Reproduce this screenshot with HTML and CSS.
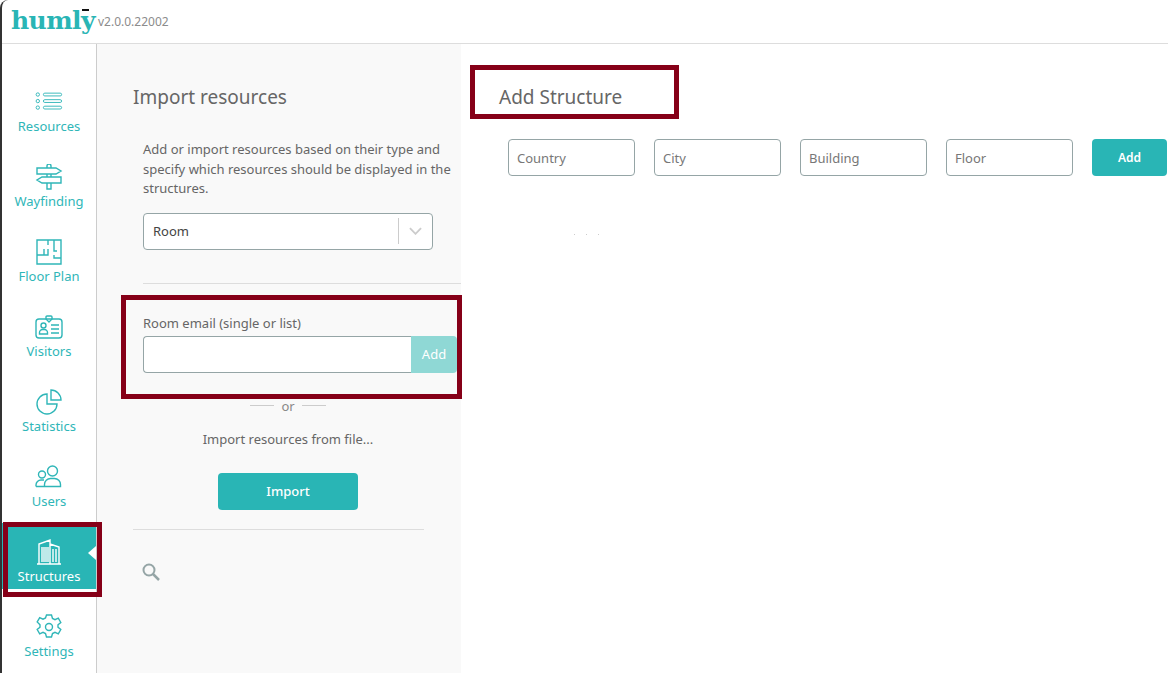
FILE: index.html
```html
<!DOCTYPE html>
<html lang="en">
<head>
<meta charset="utf-8">
<title>Humly</title>
<link rel="stylesheet" href="styles.css">
</head>
<body>
<div class="app">
  <header class="topbar">
    <span class="logo">humly<i class="logo-mark"></i></span>
    <span class="version">v2.0.0.22002</span>
  </header>
  <div class="workspace">
    <nav class="nav">
      <a class="nav-item">
        <svg class="nav-icon" viewBox="0 0 30 24"><circle cx="3" cy="4" r="1.8"/><circle cx="3" cy="11" r="1.8"/><circle cx="3" cy="18" r="1.8"/><rect x="9" y="2.5" width="19.5" height="3" rx="1.5"/><rect x="9" y="9.5" width="19.5" height="3" rx="1.5"/><rect x="9" y="16.5" width="19.5" height="3" rx="1.5"/></svg>
        <span>Resources</span>
      </a>
      <a class="nav-item">
        <svg class="nav-icon" viewBox="0 0 26 26"><path d="M11 4V2a2 2 0 0 1 4 0v2M1 4h19l5 3-5 3H1zM11 10v3M15 10v3M6 13h19v6H6l-5-3zM11 19v6h4v-6"/></svg>
        <span>Wayfinding</span>
      </a>
      <a class="nav-item">
        <svg class="nav-icon" viewBox="0 0 26 26"><path d="M1 1h24v24H1zM12 1v5M12 10v6H1M8 10v6M18 1v11h3M18 16v3h7M8 25h10"/></svg>
        <span>Floor Plan</span>
      </a>
      <a class="nav-item">
        <svg class="nav-icon" viewBox="0 0 28 24"><rect x="1" y="4" width="26" height="19" rx="3"/><path d="M11 4V2a1 1 0 0 1 1-1h4a1 1 0 0 1 1 1v2l-3 3zM4.500 19v-1.500a3 3 0 0 1 3-3h2a3 3 0 0 1 3 3V19zM16 10h8M16 14h8M16 18h8"/><circle cx="8.500" cy="10.500" r="2.500"/></svg>
        <span>Visitors</span>
      </a>
      <a class="nav-item">
        <svg class="nav-icon" viewBox="0 0 26 26"><path d="M11 5a10 10 0 1 0 10 10H11zM15 1a10 10 0 0 1 10 10H15z"/></svg>
        <span>Statistics</span>
      </a>
      <a class="nav-item">
        <svg class="nav-icon" viewBox="0 0 28 24"><circle cx="17.500" cy="6" r="5"/><circle cx="7" cy="9.500" r="3.500"/><path d="M9.500 21.500v-2a6 6 0 0 1 6-6h4a6 6 0 0 1 6 6v2zM1 21.500v-1.500a5 5 0 0 1 5-5h3M1 21.500h8"/></svg>
        <span>Users</span>
      </a>
      <a class="nav-item is-active">
        <svg class="nav-icon" viewBox="0 0 26 26"><path d="M1 25h24M3 25V5l11-4v24M14 5l9 3v17M6 8v15M8 8v15M10 8v15M12 8v15M17 10v13M20 10v13" /></svg>
        <span>Structures</span>
      </a>
      <a class="nav-item">
        <svg class="nav-icon" viewBox="0 0 26 26"><path d="M10.500 1h5l1 3.500 2.500 1.200 3.300-1.500 2.500 4.300-2.800 2.300v2.400l2.800 2.300-2.500 4.300-3.300-1.500-2.500 1.200-1 3.500h-5l-1-3.500-2.500-1.200-3.300 1.500-2.500-4.300 2.800-2.300v-2.400L1.200 8l2.500-4.300L7 5.200l2.500-1.200z"/><circle cx="13" cy="13" r="3.500"/></svg>
        <span>Settings</span>
      </a>
    </nav>
    <section class="panel">
      <h2 class="title">Import resources</h2>
      <div class="panel-body">
        <p class="intro">Add or import resources based on their type and specify which resources should be displayed in the structures.</p>
        <div class="select">
          <span class="select-value">Room</span>
          <span class="select-arrow"><svg viewBox="0 0 14 8"><path d="M1 1l6 6 6-6"/></svg></span>
        </div>
        <hr class="rule rule-wide">
        <label class="field-label">Room email (single or list)</label>
        <div class="combo">
          <div class="combo-input"></div>
          <button class="combo-add">Add</button>
        </div>
        <div class="or"><span>or</span></div>
        <p class="from-file">Import resources from file...</p>
        <button class="btn btn-import">Import</button>
      </div>
      <hr class="rule rule-lower">
      <svg class="search" viewBox="0 0 18 18"><circle cx="7" cy="7" r="5.500"/><path class="handle" d="M11 11l6 6"/></svg>
    </section>
    <main class="main">
      <h2 class="title">Add Structure</h2>
      <div class="form-row">
        <div class="text-input">Country</div>
        <div class="text-input">City</div>
        <div class="text-input">Building</div>
        <div class="text-input">Floor</div>
        <button class="btn btn-add">Add</button>
      </div>
      <div class="dots"><i></i><i></i><i></i></div>
    </main>
  </div>
</div>
<div class="mark mark-structures"></div>
<div class="mark mark-email"></div>
<div class="mark mark-title"></div>
</body>
</html>
```
FILE: styles.css
```css
* { box-sizing: border-box; }
html, body { margin: 0; height: 100%; overflow: hidden; background: #fff; }
body { font-family: "Noto Sans", "Open Sans", sans-serif; font-size: 13px; color: #666; }

.app { height: 673px; display: flex; flex-direction: column; border-left: 2px solid #333; border-top-left-radius: 8px; }

.topbar { height: 44px; flex: none; display: flex; align-items: center; border-bottom: 1px solid #ddd; padding-left: 9px; }
.logo { position: relative; font-family: "DejaVu Serif", serif; font-size: 25px; font-weight: 700; letter-spacing: -0.6px; color: #29b5b5; line-height: 1; width: 87px; margin-top: -3px; }
.logo-mark { position: absolute; left: 71px; top: 1px; width: 7px; height: 2px; background: #111; }
.version { font-size: 12px; color: #8c8c8c; margin-left: 0; }

.workspace { flex: 1; display: flex; min-height: 0; }

.nav { width: 95px; flex: none; border-right: 1px solid #ccc; padding-top: 29px; display: flex; flex-direction: column; gap: 9px; }
.nav-item { position: relative; height: 66px; flex: none; display: flex; flex-direction: column; align-items: center; padding-top: 16px; color: #2fb6b8; font-size: 13px; line-height: 18px; }
.nav-icon { width: 28px; height: 26px; fill: none; stroke: currentColor; stroke-width: 1.400; margin-bottom: 2px; }
.nav-item:first-child .nav-icon circle, .nav-item:first-child .nav-icon rect { stroke-width: 1; }
.is-active { background: #29b5b5; color: #fff; }
.is-active::after { content: ""; position: absolute; right: 0; top: 23px; border: 7px solid transparent; border-right: 8px solid #fff; border-left: 0; }

.panel { width: 364px; flex: none; background: #f9f9f9; padding: 40px 0 0 36px; }
.title { margin: 0; font-size: 19px; font-weight: 400; line-height: 26px; color: #666; }
.panel-body { padding-left: 10px; }
.intro { margin: 30px 0 0; width: 310px; line-height: 19.500px; color: #666; }

.select { width: 290px; height: 37px; margin-top: 14px; display: flex; align-items: center; background: #fff; border: 1px solid #95a5a6; border-radius: 4px; color: #444; }
.select-value { flex: 1; padding-left: 9px; }
.select-arrow { width: 34px; height: 26px; border-left: 1px solid #ccc; display: flex; align-items: center; justify-content: center; }
.select-arrow svg { width: 13px; height: 8px; fill: none; stroke: #ccc; stroke-width: 2; }

.rule { border: 0; border-top: 1px solid #ddd; margin: 0; }
.rule-wide { margin-top: 33px; }
.field-label { display: block; margin-top: 30px; line-height: 18px; }

.combo { display: flex; width: 314px; height: 37px; margin-top: 4px; }
.combo-input { flex: 1; background: #fff; border: 1px solid #95a5a6; border-right: 0; border-radius: 4px 0 0 4px; }
.combo-add { width: 46px; border: 0; border-radius: 0 4px 4px 0; background: #8fd8d5; color: #fff; font: inherit; padding: 0; }

.or { display: flex; width: 290px; margin-top: 24px; align-items: center; justify-content: center; gap: 7px; line-height: 18px; color: #888; }
.or::before, .or::after { content: ""; width: 24px; border-top: 1px solid #ccc; }
.from-file { width: 290px; margin: 15px 0 0; text-align: center; line-height: 18px; color: #666; }

.btn { border: 0; border-radius: 4px; background: #29b5b5; color: #fff; font: inherit; font-weight: 500; padding: 0; }
.btn-import { display: block; width: 140px; height: 37px; margin: 25px 0 0 75px; }
.rule-lower { width: 291px; margin-top: 19px; }
.search { display: block; width: 18px; height: 18px; margin: 33px 0 0 9px; fill: none; stroke: #95a5a6; stroke-width: 2; }
.search .handle { stroke-width: 2.500; }

.main { flex: 1; padding: 40px 0 0 38px; background: #fff; }
.form-row { display: flex; gap: 19px; margin: 29px 0 0 9px; }
.text-input { width: 127px; height: 37px; display: flex; align-items: center; padding-left: 8px; background: #fff; border: 1px solid #95a5a6; border-radius: 4px; color: #777; }
.btn-add { width: 75px; height: 37px; font-size: 12px; font-weight: 600; }
.dots { display: flex; gap: 11px; margin: 58px 0 0 75px; }
.dots i { width: 1px; height: 1px; background: #ccc; }

.mark { position: absolute; border: 5px solid #860018; pointer-events: none; }
.mark-structures { left: 3px; top: 522px; width: 99px; height: 75px; }
.mark-email { left: 121px; top: 295px; width: 341px; height: 104px; }
.mark-title { left: 470px; top: 65px; width: 209px; height: 54px; }
```
